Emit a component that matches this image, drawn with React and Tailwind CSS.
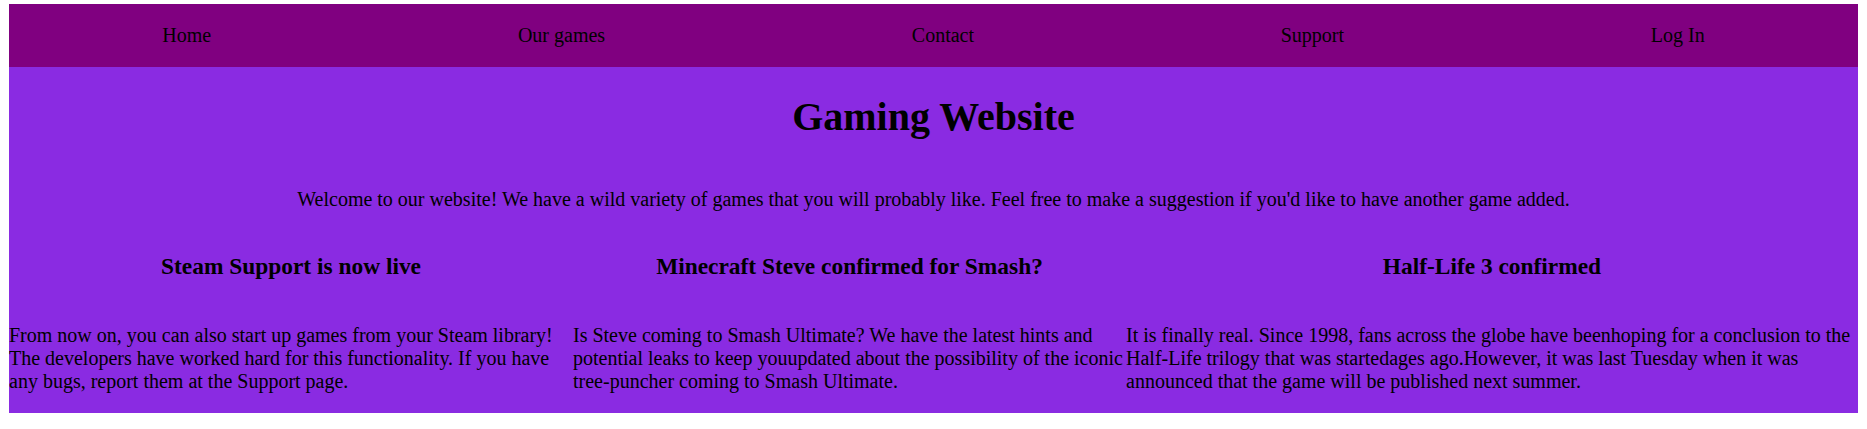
import React from 'react';

const links = ['Home', 'Our games', 'Contact', 'Support', 'Log In'];

const news = [
  {
    title: 'Steam Support is now live',
    text: 'From now on, you can also start up games from your Steam library! The developers have worked hard for this functionality. If you have any bugs, report them at the Support page.',
  },
  {
    title: 'Minecraft Steve confirmed for Smash?',
    text: 'Is Steve coming to Smash Ultimate? We have the latest hints and potential leaks to keep youupdated about the possibility of the iconic tree-puncher coming to Smash Ultimate.',
  },
  {
    title: 'Half-Life 3 confirmed',
    text: 'It is finally real. Since 1998, fans across the globe have beenhoping for a conclusion to the Half-Life trilogy that was startedages ago.However, it was last Tuesday when it was announced that the game will be published next summer.',
  },
];

const App = () => {
  return (
    <div className="bg-white pt-[4px] px-[9px] font-['Liberation_Serif','Times_New_Roman',serif] text-black">
      {/* Nav */}
      <nav className="h-[63px] bg-[#800080] flex justify-around items-center text-[20px] leading-[23px]">
        {links.map((l) => (
          <a key={l} href="#" className="text-black">
            {l}
          </a>
        ))}
      </nav>

      <main className="bg-[#8a2be2] pb-[20px]">
        <h1 className="pt-[27px] text-center text-[40px] leading-[46px] font-bold">
          Gaming Website
        </h1>
        <p className="mt-[48px] text-center text-[20px] leading-[23px]">
          Welcome to our website! We have a wild variety of games that you will probably like. Feel free to make a suggestion if you'd like to have another game added.
        </p>

        {/* News columns */}
        <div className="mt-[42px] grid grid-cols-[564px_553px_1fr]">
          {news.map((n) => (
            <div key={n.title}>
              <h3 className="text-center text-[23.4px] leading-[27px] font-bold">{n.title}</h3>
              <p className="mt-[44px] text-[20px] leading-[23px]">{n.text}</p>
            </div>
          ))}
        </div>
      </main>
    </div>
  );
};

export default App;
